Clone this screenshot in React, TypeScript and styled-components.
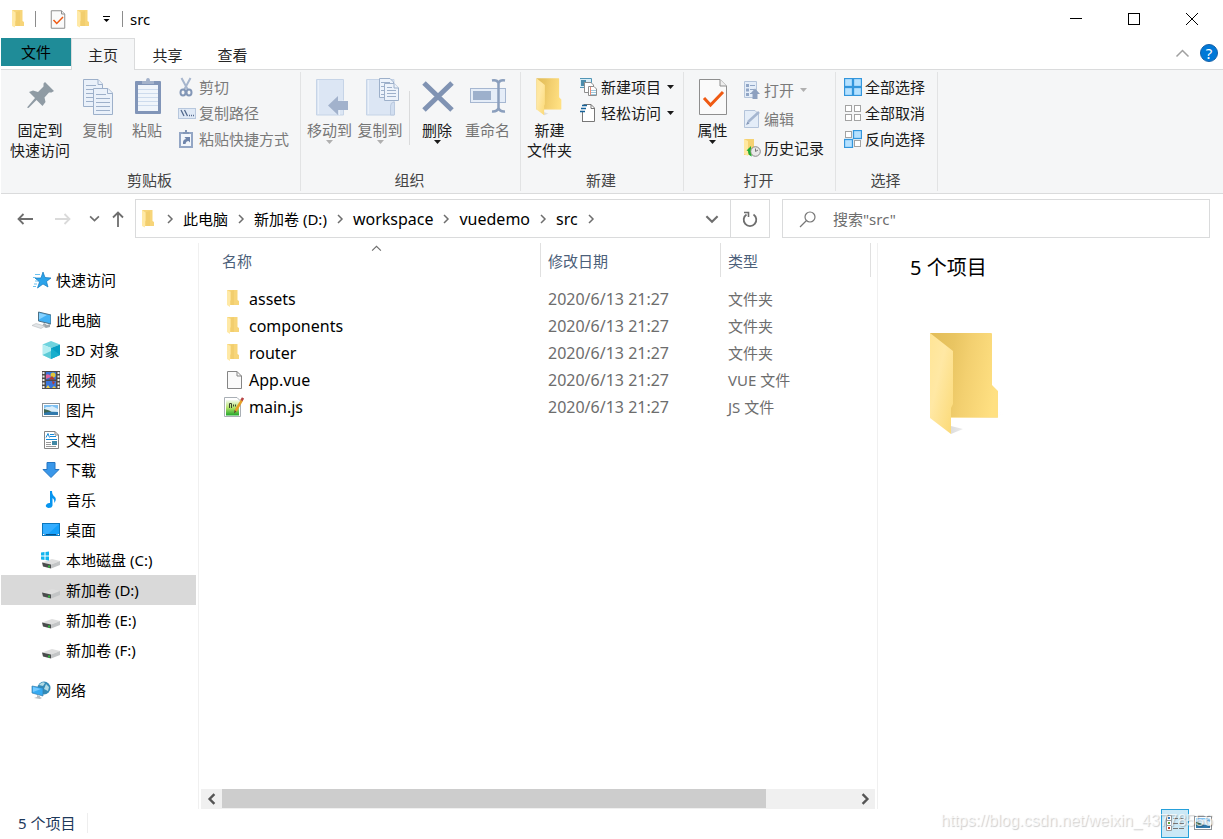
import React from "react";
import styled, { createGlobalStyle } from "styled-components";

const line = "#dadbdc";
const blueStroke = "#9db0ca";

const GlobalStyle = createGlobalStyle`
  * { box-sizing: border-box; }
  body { margin: 0; background: #fff; }
  body, button, input, table {
    font-family: "Noto Sans", "Noto Sans CJK SC", sans-serif;
    font-size: 15px;
    line-height: 20px;
    color: #000;
  }
  button { padding: 0; border: 0; background: none; }
  svg { display: block; flex: none; }
`;

const Window = styled.div`
  position: relative;
  display: flex;
  flex-direction: column;
  min-height: 100vh;
  padding-left: 1px;
`;

/* Title bar */
const TitleBar = styled.header`
  display: flex;
  align-items: center;
  height: 38px;
  padding: 0 2px 0 10px;
`;
const QuickButton = styled.button<{ $w: number }>`
  display: flex;
  align-items: center;
  justify-content: center;
  width: ${(p) => p.$w}px;
  height: 24px;
`;
const TitleRule = styled.span<{ $left: number; $right: number }>`
  width: 1px;
  height: 16px;
  margin: 0 ${(p) => p.$right}px 0 ${(p) => p.$left}px;
  background: #8c8c8c;
`;
const Title = styled.h1`
  flex: 1;
  margin: 0;
  font-size: 15px;
  font-weight: 400;
`;
const WindowButton = styled.button`
  display: flex;
  align-items: center;
  justify-content: center;
  width: 58px;
  height: 38px;
`;

/* Tabs */
const TabRow = styled.nav`
  display: flex;
  height: 32px;
  box-shadow: inset 0 -1px ${line};
`;
const FileTab = styled.button`
  width: 70px;
  height: 28px;
  background: #1f8c98;
`;
const Tab = styled.button<{ $active?: boolean }>`
  width: ${(p) => (p.$active ? 64 : 65)}px;
  height: 32px;
  color: #262626;
  border: 1px solid ${(p) => (p.$active ? line : "transparent")};
  border-bottom: 0;
  background: ${(p) => (p.$active ? "#f5f6f7" : "transparent")};
`;
const TabTools = styled.div`
  display: flex;
  align-items: center;
  gap: 11px;
  margin-left: auto;
  padding: 0 5px 2px 0;
`;
const HelpButton = styled.button`
  width: 18px;
  height: 18px;
  border: 1px solid #1560a8;
  border-radius: 50%;
  background: #0078d7;
  color: #fff;
  line-height: 16px;
`;

/* Ribbon */
const Ribbon = styled.section`
  display: flex;
  height: 124px;
  padding: 2px 0;
  background: #f5f6f7;
  border-bottom: 1px solid ${line};
`;
const Group = styled.div<{ $w: number }>`
  display: flex;
  flex-direction: column;
  flex: none;
  width: ${(p) => p.$w}px;
  border-right: 1px solid #e2e3e4;
`;
const GroupBody = styled.div<{ $left?: number }>`
  display: flex;
  flex: 1;
  padding-left: ${(p) => p.$left ?? 5}px;
`;
const GroupLabel = styled.div`
  height: 21px;
  padding-right: 2px;
  text-align: center;
  color: #444;
`;
const BigButton = styled.button<{ $w: number; $dim?: boolean }>`
  display: flex;
  flex-direction: column;
  align-items: center;
  width: ${(p) => p.$w}px;
  height: 90px;
  padding-top: 6px;
  white-space: nowrap;
  color: ${(p) => (p.$dim ? "#757575" : "#1a1a1a")};
  svg + span { margin-top: 4px; }
`;
const GroupRule = styled.span`
  width: 1px;
  height: 54px;
  margin: 19px 2px 0 4px;
  background: ${line};
`;
const SmallList = styled.div<{ $row?: number; $left?: number; $top?: number }>`
  display: flex;
  flex-direction: column;
  padding: ${(p) => p.$top ?? 2}px 0 0 ${(p) => p.$left ?? 5}px;
  button { height: ${(p) => p.$row ?? 26}px; }
`;
const SmallButton = styled.button<{ $dim?: boolean }>`
  display: flex;
  align-items: center;
  gap: 3px;
  white-space: nowrap;
  color: ${(p) => (p.$dim ? "#7a7a7a" : "#1a1a1a")};
  span { margin-right: 3px; }
`;

/* Address row */
const AddressRow = styled.div`
  display: flex;
  align-items: center;
  height: 49px;
  padding: 0 13px 0 9px;
`;
const NavButton = styled.button<{ $w: number }>`
  display: flex;
  align-items: center;
  justify-content: center;
  width: ${(p) => p.$w}px;
  height: 30px;
`;
const AddressBox = styled.div`
  display: flex;
  align-items: center;
  flex: 3 1 635px;
  height: 39px;
  margin: 0 12px 0 1px;
  padding-left: 5px;
  border: 1px solid ${line};
`;
const Crumbs = styled.nav`
  display: flex;
  align-items: center;
  flex: 1;
  padding-left: 10px;
  gap: 8px;
  white-space: nowrap;
`;
const Crumb = styled.a<{ $size: number }>`
  font-size: ${(p) => p.$size}px;
  color: #000;
  text-decoration: none;
`;
const RefreshButton = styled.button`
  display: flex;
  align-items: center;
  justify-content: center;
  width: 39px;
  height: 37px;
  border-left: 1px solid ${line};
`;
const SearchBox = styled.label`
  display: flex;
  align-items: center;
  gap: 16px;
  flex: 2 1 428px;
  height: 39px;
  padding: 0 16px;
  border: 1px solid ${line};
`;
const SearchInput = styled.input`
  flex: 1;
  min-width: 0;
  padding: 0;
  border: 0;
  outline: 0;
  background: none;
  &::placeholder { color: #6d6d6d; opacity: 1; }
`;

/* Main area */
const Main = styled.main`
  display: flex;
  flex: 1;
`;
const Sidebar = styled.nav`
  display: flex;
  flex-direction: column;
  gap: 10px;
  width: 198px;
  padding: 22px 2px 0 0;
  border-right: 1px solid #f0f0f0;
`;
const TreeItem = styled.a<{ $nested?: boolean; $active?: boolean }>`
  display: flex;
  align-items: center;
  gap: 5px;
  height: 30px;
  padding-left: ${(p) => (p.$nested ? 40 : 30)}px;
  color: #000;
  text-decoration: none;
  white-space: nowrap;
  background: ${(p) => (p.$active ? "#d9d9d9" : "transparent")};
`;
const FilePane = styled.section`
  display: flex;
  flex-direction: column;
  width: 679px;
  padding: 0 2px;
  border-right: 1px solid #f0f0f0;
`;
const FileTable = styled.table`
  width: 670px;
  table-layout: fixed;
  border-collapse: separate;
  border-spacing: 0;
  th, td { padding: 0; text-align: left; font-weight: 400; }
`;
const HeadCell = styled.th<{ $w: number; $left: number }>`
  width: ${(p) => p.$w}px;
  height: 42px;
  vertical-align: top;
  color: #4c607a;
  div {
    position: relative;
    height: 34px;
    padding: 8px 0 0 ${(p) => p.$left}px;
    border-right: 1px solid #e0e0e0;
  }
`;
const SortMark = styled.span`
  position: absolute;
  top: 0;
  left: 50%;
`;
const NameCell = styled.td`
  height: 27px;
  font-size: 16px;
  div {
    display: flex;
    align-items: center;
    gap: 5px;
    padding-left: 23px;
  }
`;
const DataCell = styled.td<{ $size: number }>`
  font-size: ${(p) => p.$size}px;
  color: #6d6d6d;
  div { padding-left: 7px; }
`;
const ScrollBar = styled.div`
  display: flex;
  height: 20px;
  margin-top: auto;
  background: #f0f0f0;
`;
const ScrollButton = styled.button`
  display: flex;
  align-items: center;
  justify-content: center;
  width: 21px;
`;
const ScrollTrack = styled.div`
  flex: 1;
  height: 19px;
`;
const ScrollThumb = styled.div`
  width: 86%;
  height: 100%;
  background: #cdcdcd;
`;
const Preview = styled.aside`
  flex: 1;
  padding: 11px 0 0 32px;
`;
const PreviewTitle = styled.h2`
  margin: 0 0 50px;
  font-size: 20px;
  line-height: 28px;
  font-weight: 400;
`;
const Indent = styled.div`
  padding-left: 19px;
`;

/* Status bar */
const StatusBar = styled.footer`
  display: flex;
  align-items: center;
  height: 30px;
  padding: 0 11px 2px 17px;
  color: #1e395b;
`;
const StatusText = styled.span`
  padding-right: 12px;
  border-right: 1px solid #eee;
`;
const ViewButtons = styled.div`
  display: flex;
  align-items: center;
  gap: 5px;
  margin-left: auto;
`;
const ViewButton = styled.button<{ $active?: boolean }>`
  display: flex;
  align-items: center;
  justify-content: center;
  width: ${(p) => (p.$active ? 28 : 18)}px;
  height: 29px;
  border: ${(p) => (p.$active ? "1px solid #26a0da" : "0")};
  background: ${(p) => (p.$active ? "#cbe8f6" : "none")};
`;
const Watermark = styled.div`
  position: absolute;
  right: 10px;
  bottom: 8px;
  font-family: "Liberation Sans", sans-serif;
  font-size: 16px;
  color: rgba(255, 255, 255, 0.7);
  text-shadow: 1px 1px 1px rgba(0, 0, 0, 0.2);
  pointer-events: none;
`;

/* Icons */
const Folder = ({ w = 14, h = 18 }: { w?: number; h?: number }) => (
  <svg width={w} height={h} viewBox="0 0 14 18">
    <path d="M1 0H11.5V11L13 12V16H1Z" fill="#f7d579" />
    <path d="M5 2L9 1V16H5Z" fill="#efca68" opacity=".6" />
    <path d="M1 0L4.5 2.5V10.5L4 11.5V17.5L1 16Z" fill="#ffe9a6" />
  </svg>
);

const LargeFolder = ({ w = 76, h = 104 }: { w?: number; h?: number }) => (
  <svg width={w} height={h} viewBox="0 0 76 104">
    <defs>
      <linearGradient id="folderBack" x1="0" y1=".3" x2="1" y2=".5">
        <stop offset="0" stopColor="#e3be5a" />
        <stop offset=".3" stopColor="#e9c562" />
        <stop offset=".55" stopColor="#f3d070" />
        <stop offset="1" stopColor="#ffe082" />
      </linearGradient>
      <linearGradient id="folderFlap" x1="0" y1="0" x2="1" y2="1">
        <stop offset="0" stopColor="#ffe596" />
        <stop offset=".4" stopColor="#ffe8a4" />
        <stop offset="1" stopColor="#fbd975" />
      </linearGradient>
      <linearGradient id="folderShade">
        <stop offset="0" stopColor="#bbb" />
        <stop offset="1" stopColor="#fff" stopOpacity="0" />
      </linearGradient>
    </defs>
    <path d="M22 102L34 97L22 94ZM66 86L77 82L68 79Z" fill="url(#folderShade)" opacity=".5" />
    <path d="M1 1H62Q63 1 63 2V53L69 59V85Q69 86 68 86H1Z" fill="url(#folderBack)" />
    <path d="M22 85.500H68" stroke="#fbe3a0" />
    <path d="M1 1L24 19V72L22 76V102L1 86Z" fill="url(#folderFlap)" />
  </svg>
);

const CheckPage = ({ w, h }: { w: number; h: number }) => (
  <svg width={w} height={h} viewBox="0 0 30 38">
    <path d="M1.500 1.500H22L28.500 8V36.500H1.500Z" fill="#fafafa" stroke="#8e8e8e" strokeWidth={w < 20 ? 2 : 1} />
    <path d="M22 1.500V8H28.500" fill="#eee" stroke="#8e8e8e" strokeWidth={w < 20 ? 2 : 1} />
    <path d="M6 20L12.500 27L25 14" fill="none" stroke="#ef5a13" strokeWidth="3" />
  </svg>
);

const Caret = ({ color = "#1a1a1a" }: { color?: string }) => (
  <svg width="7" height="4" viewBox="0 0 7 4">
    <path d="M0 0H7L3.500 4Z" fill={color} />
  </svg>
);

const Chevron = ({
  dir = "right",
  size = 10,
  color = "#6e6e6e",
  weight = 1.5,
}: {
  dir?: "right" | "left" | "down" | "up";
  size?: number;
  color?: string;
  weight?: number;
}) => {
  const path = { right: "M3 1L7 5L3 9", left: "M7 1L3 5L7 9", down: "M1 3L5 7L9 3", up: "M1 7L5 3L9 7" }[dir];
  return (
    <svg width={size} height={size} viewBox="0 0 10 10">
      <path d={path} fill="none" stroke={color} strokeWidth={weight} />
    </svg>
  );
};

const PinIcon = () => (
  <svg width="38" height="38" viewBox="0 1 38 38">
    <path d="M24 5L33 14L30.500 15.500H28L23.500 20.500L24.500 25L21.500 29L15.500 23L7.500 31L6 30.500L14 21L8 15L12 13.500L17 15L22.500 9.500V6.500Z" fill="#8f9ba4" />
  </svg>
);

const CopyIcon = () => (
  <svg width="38" height="38" viewBox="0 0 38 38">
    <g stroke={blueStroke} fill="#eaf1fa">
      <path d="M4.500 1.500H19L23.500 6V28.500H4.500Z" />
      <path d="M19 1.500V6.500H23.500M7 7.500H17M7 11.500H20M7 15.500H20M7 19.500H20M7 23.500H20" />
      <path d="M14.500 10.500H29L33.500 15V36.500H14.500Z" />
      <path d="M28.500 10.500V15.500H33.500M17 16.500H27M17 20.500H31M17 24.500H31M17 28.500H31M17 32.500H31" />
    </g>
  </svg>
);

const PasteIcon = () => (
  <svg width="38" height="38" viewBox="-1 1 38 38">
    <rect x="6" y="4" width="26" height="33" rx="1" fill="#8195b8" />
    <path d="M9 8H29V34H9Z" fill="#f0f5fb" />
    <path d="M9 12.500H29M9 16.500H29M9 20.500H29M9 24.500H29M9 28.500H29" stroke="#cddbed" />
    <path d="M13 7V4H17Q17 1 19 1T21 4H25V7Z" fill="#a3b2cb" />
  </svg>
);

const ScissorsIcon = () => (
  <svg width="18" height="20" viewBox="1 0 18 20">
    <g fill="none" stroke="#8397b7" strokeWidth="1.500">
      <path d="M4.500 1L11 13M13.500 1L7 13" stroke="#a7b6cd" strokeWidth="2" />
      <ellipse cx="6" cy="15.500" rx="2.500" ry="3" strokeWidth="2" />
      <ellipse cx="12" cy="15.500" rx="2.500" ry="3" strokeWidth="2" />
    </g>
  </svg>
);

const PathIcon = () => (
  <svg width="18" height="18" viewBox="0 0 18 18">
    <rect x=".5" y="4.500" width="17" height="10" fill="#dfe9f6" stroke="#b7c7dd" />
    <path d="M3 6L6 12M6.500 6L9.500 12M11 11.500H12M13 11.500H14M15 11.500H16" stroke="#53698d" strokeWidth="1.300" />
  </svg>
);

const ShortcutIcon = () => (
  <svg width="18" height="20" viewBox="1 0 18 20">
    <rect x="3" y="4" width="12" height="14" fill="#f2f6fb" stroke="#93a6c5" strokeWidth="2" />
    <path d="M6 5V3H8V1H10V3H12V5Z" fill="#8397b7" />
    <path d="M6 15Q5.500 10.500 9 10L7.500 8H13V13.500L11.500 12Q9 12 8.500 15Z" fill="#6f85ab" />
  </svg>
);

const MoveIcon = () => (
  <svg width="38" height="38" viewBox="-2 0 38 38">
    <path d="M3.500 1.500H30.500V37H3.500Z" fill="#dce6f4" stroke="#c6d4e7" />
    <path d="M5.500 2V36M26.500 37V26L30.500 22" fill="none" stroke="#eaf1fa" />
    <path d="M15 27.500L25 18V23H35V32H25V37Z" fill="#a2b2cc" />
  </svg>
);

const CopyToIcon = () => (
  <svg width="38" height="38" viewBox="-2 0 38 38">
    <path d="M3.500 1.500H31V37H3.500Z" fill="#dce6f4" stroke="#c6d4e7" />
    <path d="M5.500 2V36" stroke="#eaf1fa" />
    <path d="M27.500 37V28Q27.500 24 31.500 24V37Z" fill="#d1def0" stroke="#bccbe0" />
    <g fill="#edf3fb" stroke={blueStroke}>
      <path d="M16.500 .5H27L30.500 4V19.500H16.500Z" />
      <path d="M18 4.500H27M18 8.500H27M18 12.500H27M18 16.500H27" />
      <path d="M21.500 5.500H31L35.500 10V22.500H21.500Z" />
      <path d="M31 5.500V10H35.500M24 9.500H29M24 12.500H33M24 15.500H33M24 18.500H33" />
    </g>
  </svg>
);

const DeleteIcon = () => (
  <svg width="38" height="38" viewBox="-1 1 38 38">
    <path d="M5 6L33 33M33 6L5 33" stroke="#8093b3" strokeWidth="5" />
  </svg>
);

const RenameIcon = () => (
  <svg width="38" height="38" viewBox="0 1 38 38">
    <rect x="1.500" y="11.500" width="35" height="14" fill="#e5edf8" stroke="#a6b7d1" />
    <rect x="4" y="14" width="18" height="9" fill="#9db0cc" />
    <path d="M23 3.500Q28 2.500 29.500 6Q31 2.500 36 3.500M29.500 5V32M23 34.500Q28 35 29.500 31Q31 35 36 34.500" fill="none" stroke="#8b9fbd" strokeWidth="2.500" />
  </svg>
);

const NewItemIcon = () => (
  <svg width="18" height="20" viewBox="1 0 18 20">
    <path d="M.5 1.500H12.500V10.500H.5Z" fill="#d8edf7" stroke="#5195b5" />
    <path d="M2 3H7V9H2Z" fill="#4b8dac" />
    <path d="M5.500 5.500H12L14.500 8V15.500H5.500Z" fill="#fff" stroke="#8e8e8e" />
    <path d="M9.500 9.500H15L17.500 12V18.500H9.500Z" fill="#fff" stroke="#8e8e8e" />
    <path d="M11.500 10V18" stroke="#e78c79" />
    <path d="M12 13.500H17M12 15.500H17M12 17.500H17" stroke="#9cc8de" />
  </svg>
);

const EasyAccessIcon = () => (
  <svg width="18" height="20" viewBox="1 0 18 20">
    <path d="M4.500 1.500H12L15.500 5V18.500H3" fill="#fff" stroke="#777" />
    <path d="M3.500 9V18M12 1.500V5.500H15.500" fill="none" stroke="#777" />
    <path d="M3 2.500H8M2 5.500H7M1 8.500H6" stroke="#17639a" strokeWidth="1.500" />
  </svg>
);

const OpenIcon = () => (
  <svg width="18" height="20" viewBox="0 0 18 20">
    <path d="M1.500 1.500H13.500V17.500H1.500Z" fill="#e4edf8" stroke="#b4c4da" />
    <path d="M3 4H6V7H3ZM3 8.500H6V11.500H3ZM3 13H6V16H3Z" fill="#91a6c6" />
    <path d="M7 5.500H12M7 9.500H11M7 13.500H10" stroke="#91a6c6" />
    <path d="M9.500 19V14H7L12 8.500L17 14H14.500V19Z" fill="#8da0bf" />
  </svg>
);

const EditIcon = () => (
  <svg width="18" height="20" viewBox="0 0 18 20">
    <path d="M1.500 1.500H12L15.500 5V18.500H1.500Z" fill="#e4edf8" stroke="#b4c4da" />
    <path d="M5 13L16 3" stroke="#a5b6d0" strokeWidth="2.500" />
    <path d="M3 16L4.500 12.500L6.500 14.500Z" fill="#8397b7" />
  </svg>
);

const HistoryIcon = () => (
  <svg width="18" height="20" viewBox="0 0 18 20">
    <path d="M1 1H11V17H1Z" fill="#f5d272" />
    <path d="M1 1L5 3V18L1 16Z" fill="#ffe8a2" />
    <circle cx="12.500" cy="13.500" r="4.800" fill="#e9e9e9" stroke="#888" />
    <path d="M12.500 10.500V13.500L15 12" fill="none" stroke="#777" />
    <path d="M3.500 12.500L8 8V10.500Q6.500 13.500 9 18.500Q5 17.500 5 13Z" fill="#20ad35" />
  </svg>
);

const SelectIcon = ({ on }: { on: boolean[] }) => (
  <svg width="18" height="18" viewBox="0 0 18 18">
    {[[0, 0], [9, 0], [0, 9], [9, 9]].map(([x, y], i) =>
      on[i] ? (
        <rect key={i} x={x + 0.5} y={y + 0.5} width="8" height="8" fill="#b5e1ff" stroke="#3396dc" strokeWidth="1.300" />
      ) : (
        <rect key={i} x={x + 1.5} y={y + 1.5} width="6" height="6" fill="#fff" stroke="#a3a3a3" />
      ),
    )}
  </svg>
);

const Arrow = ({ color = "#6e6e6e", turn = 0 }: { color?: string; turn?: number }) => (
  <svg width="18" height="18" viewBox="0 0 18 18">
    <path d="M2 9H17M7.500 4L2.500 9L7.500 14" transform={`rotate(${turn} 9 9)`} fill="none" stroke={color} strokeWidth="1.800" />
  </svg>
);

const RefreshIcon = () => (
  <svg width="18" height="18" viewBox="0 0 18 18">
    <path d="M5.500 4.500A6.300 6.300 0 1 0 12.500 4.500" fill="none" stroke="#6e6e6e" strokeWidth="1.800" />
    <path d="M3 2.500H7.500V7" fill="none" stroke="#6e6e6e" strokeWidth="1.600" />
  </svg>
);

const SearchIcon = () => (
  <svg width="18" height="18" viewBox="0 0 18 18">
    <circle cx="11" cy="7" r="5" fill="none" stroke="#777" strokeWidth="1.200" />
    <path d="M7.500 10.500L1 17" stroke="#777" strokeWidth="1.200" />
  </svg>
);

const StarIcon = () => (
  <svg width="20" height="18" viewBox="0 0 20 18">
    <path d="M12 1L14 6.500L20 7L15.500 10.500L17 16L12 13L6.500 17L8.500 11L4 7H10Z" fill="#2ba3ea" stroke="#1179bd" strokeWidth=".7" />
    <path d="M4 3.500H9M2 6.500H5M4 10H7M3 13H6M2 15.500H5" stroke="#6cc1ef" />
  </svg>
);

const PcIcon = () => (
  <svg width="20" height="18" viewBox="0 0 20 18">
    <path d="M7.500 1L20 4V13L7.500 10Z" fill="#42b1f5" stroke="#4c7086" />
    <path d="M8 2L16 4L8 8.500Z" fill="#86d2ff" />
    <path d="M13 12L16 14L19 13V16L15 17L11 15Z" fill="#a1a8ad" />
    <path d="M1 14.500L5 12.500L14 15L10 17.500Z" fill="#e2e5e7" stroke="#b7bcc0" strokeWidth=".6" />
  </svg>
);

const CubeIcon = () => (
  <svg width="20" height="20" viewBox="0 0 20 20">
    <path d="M1.500 4.500L10 1L19 4.500L10 8Z" fill="#6fd3de" />
    <path d="M1.500 4.500L10 8V19L1.500 15Z" fill="#b4eef2" />
    <path d="M1.500 15L10 11V19Z" fill="#5ccbd6" />
    <path d="M19 4.500L10 8V19L19 15Z" fill="#089fc4" />
    <path d="M10 8L19 15L10 19Z" fill="#18afcd" />
  </svg>
);

const VideoIcon = () => (
  <svg width="20" height="20" viewBox="0 0 20 20">
    <path d="M1 1H19V19H1Z" fill="#4e4a49" />
    <path d="M2.500 2V18M17.500 2V18" stroke="#eee" strokeWidth="2" strokeDasharray="2 1.500" />
    <path d="M5 2H15V9.500H5ZM5 11H15V18H5Z" fill="#3975db" />
    <path d="M5 5Q8 3 10 7Q7 8 5 9Z" fill="#e1629e" />
    <circle cx="12" cy="5" r="2.500" fill="#dfc53a" />
    <path d="M9 8L11 6L14 9.500H8ZM11 11L14 12L12 15Z" fill="#b83829" />
    <path d="M5 18L7 15L9 18ZM11 18L13 16L15 18Z" fill="#f0cf41" />
  </svg>
);

const PictureIcon = () => (
  <svg width="20" height="16" viewBox="0 0 20 16">
    <rect x="1.500" y="1.500" width="17" height="13" fill="#fff" stroke="#8e9499" />
    <path d="M3 3H17V13H3Z" fill="#7fc1f2" />
    <path d="M5 5H9L11 4L17 7V10H3V7Z" fill="#d9eefb" />
    <path d="M3 7Q9 8 12 11L3 12Z" fill="#3d6654" />
    <path d="M3 11Q9 9 17 10V13H3Z" fill="#317aad" />
  </svg>
);

const DocIcon = () => (
  <svg width="20" height="20" viewBox="0 0 20 20">
    <path d="M3.500 1.500H14L17.500 5V18.500H3.500Z" fill="#fff" stroke="#858585" />
    <path d="M14 1.500V5H17.500" fill="none" stroke="#858585" />
    <path d="M5 7.500L7 3.500L8.500 7.500M9 4.500H13M9 6.500H15M5 9.500H16" fill="none" stroke="#1689d8" />
    <path d="M5 12.500H10M5 14.500H10M5 16.500H15" stroke="#999" />
    <path d="M11 11H16V15H11Z" fill="#4289a5" />
  </svg>
);

const DownloadIcon = () => (
  <svg width="20" height="20" viewBox="0 0 20 20">
    <path d="M6 2.500H14V9.500H18L10 17.500L2 9.500H6Z" fill="#3997e9" stroke="#2475c2" />
  </svg>
);

const MusicIcon = () => (
  <svg width="20" height="20" viewBox="0 0 20 20">
    <path d="M9 1H11Q11 5 14 7Q16 10 13 13Q14 10 11.500 8V15.500Q11 18 7.500 18Q4 17 5 15Q6.500 12.500 9 13Z" fill="#0795ef" />
  </svg>
);

const DesktopIcon = () => (
  <svg width="20" height="16" viewBox="0 0 20 16">
    <rect x="1.500" y="1.500" width="17" height="12" fill="#14a0fb" stroke="#0b77bd" />
    <path d="M2 2H18L7 12H2Z" fill="#34adff" />
    <path d="M2 12.500H4M5 12.500H15M16 12.500H18" stroke="#084f87" />
    <path d="M2 12.500H3.500M16.500 12.500H18" stroke="#fff" />
  </svg>
);

const DriveIcon = ({ system }: { system?: boolean }) => (
  <svg width="20" height="18" viewBox="0 0 20 18">
    <path d="M1 11.500L11 8L19 10L10 13.500Z" fill="#dedede" />
    <path d="M1 11.500L10 13.500V17.500L2 15.500Z" fill="#4a4c4d" />
    <path d="M10 13.500L19 10V14L10 17.500Z" fill="#c3c5c6" />
    <path d="M8 14.500V16.500" stroke="#2bd83a" strokeWidth="1.500" />
    {system && (
      <path d="M0 1.500L3.500 1V4.500H0ZM4.500 1L8 .5V4.500H4.500ZM0 5.500H3.500V9L0 8.500ZM4.500 5.500H8V9.500L4.500 9Z" fill="#12b4ee" />
    )}
  </svg>
);

const NetworkIcon = () => (
  <svg width="20" height="20" viewBox="0 0 20 20">
    <circle cx="13" cy="8" r="6.500" fill="#348bb7" />
    <path d="M8 5Q11 1 14 3L12 6ZM15 4L18 7L17 11L13 9Z" fill="#b2dbe5" />
    <path d="M1 6L12 8V16L1 13Z" fill="#35aaf2" stroke="#367eac" strokeWidth=".7" />
    <path d="M2 7L10 9L2 12Z" fill="#75caff" />
    <path d="M6 15V17L3 18L9 19L11 18L9 17V16Z" fill="#b7bec2" />
  </svg>
);

const BlankFileIcon = () => (
  <svg width="20" height="20" viewBox="0 0 20 20">
    <path d="M3.500 1.500H13L17.500 6V18.500H3.500Z" fill="#fafafa" stroke="#858585" />
    <path d="M13 1.500V6H17.500" fill="none" stroke="#858585" />
  </svg>
);

const JsFileIcon = () => (
  <svg width="20" height="20" viewBox="0 0 20 20">
    <defs>
      <linearGradient id="jsGreen" x1="0" y1="0" x2="0" y2="1">
        <stop offset="0" stopColor="#f4faf0" />
        <stop offset=".5" stopColor="#b2e267" />
        <stop offset="1" stopColor="#20a62b" />
      </linearGradient>
    </defs>
    <path d="M.5 .5H13L16.500 4V19.500H.5Z" fill="#fff" stroke="#a9afb5" />
    <path d="M2 3H15V18.500H2Z" fill="url(#jsGreen)" />
    <path d="M5.500 11V6.500H7.500V11M9.500 7.500V9.500M11.500 7.500V9.500" fill="none" stroke="#3b442f" />
    <path d="M11.500 14L18 3" stroke="#e6a027" strokeWidth="2.500" />
    <path d="M17.500 3.500L19 1" stroke="#b74545" strokeWidth="2.500" />
    <path d="M10 16.500L10.500 13L12.500 14.500Z" fill="#614c31" />
  </svg>
);

const DetailsIcon = () => (
  <svg width="18" height="17" viewBox="0 0 18 17">
    <path d="M.5 .5H5.500V5.500H.5ZM.5 5.500H5.500V10.500H.5ZM.5 10.500H5.500V15.500H.5Z" fill="#fff" stroke="#999" />
    <path d="M2 2H4V4H2Z" fill="#397ec0" />
    <path d="M2 7H4V9H2Z" fill="#61a13a" />
    <path d="M2 12H4V14H2Z" fill="#c23b26" />
    <path d="M7 3.500H12M13 3.500H18M7 8.500H12M13 8.500H18M7 13.500H12M13 13.500H18" stroke="#777" />
  </svg>
);

const FolderRowIcon = () => (
  <svg width="20" height="20" viewBox="0 0 20 20">
    <path d="M3 1H13.500V11L15 12V16H3Z" fill="#f7d579" />
    <path d="M7 2L10 1V16H7Z" fill="#efca68" opacity=".6" />
    <path d="M3 1L6.500 3V11L6 12V18L3 16Z" fill="#ffe9a6" />
  </svg>
);

const places = [
  { name: "3D 对象", icon: <CubeIcon /> },
  { name: "视频", icon: <VideoIcon /> },
  { name: "图片", icon: <PictureIcon /> },
  { name: "文档", icon: <DocIcon /> },
  { name: "下载", icon: <DownloadIcon /> },
  { name: "音乐", icon: <MusicIcon /> },
  { name: "桌面", icon: <DesktopIcon /> },
  { name: "本地磁盘 (C:)", icon: <DriveIcon system /> },
  { name: "新加卷 (D:)", icon: <DriveIcon />, active: true },
  { name: "新加卷 (E:)", icon: <DriveIcon /> },
  { name: "新加卷 (F:)", icon: <DriveIcon /> },
];

const files = [
  { name: "assets", type: "文件夹", icon: <FolderRowIcon /> },
  { name: "components", type: "文件夹", icon: <FolderRowIcon /> },
  { name: "router", type: "文件夹", icon: <FolderRowIcon /> },
  { name: "App.vue", type: "VUE 文件", icon: <BlankFileIcon /> },
  { name: "main.js", type: "JS 文件", icon: <JsFileIcon /> },
];

const crumbs = [
  { name: "此电脑", size: 15 },
  { name: "新加卷 (D:)", size: 15 },
  { name: "workspace", size: 16 },
  { name: "vuedemo", size: 16 },
  { name: "src", size: 16 },
];

export default function App() {
  return (
    <Window>
      <GlobalStyle />
      <TitleBar>
        <QuickButton $w={14} aria-label="文件夹"><Folder /></QuickButton>
        <TitleRule $left={10} $right={12} />
        <QuickButton $w={20} aria-label="属性"><CheckPage w={16} h={19} /></QuickButton>
        <QuickButton $w={30} aria-label="新建文件夹"><Folder /></QuickButton>
        <QuickButton $w={16} aria-label="自定义快速访问工具栏">
          <svg width="8" height="8" viewBox="0 0 8 8"><path d="M1 1.500H8" stroke="#000" /><path d="M1.500 4H7.500L4.500 7Z" fill="#000" /></svg>
        </QuickButton>
        <TitleRule $left={8} $right={7} />
        <Title>src</Title>
        <WindowButton aria-label="最小化">
          <svg width="12" height="12" viewBox="0 0 12 12"><path d="M0 5.500H12" stroke="#000" /></svg>
        </WindowButton>
        <WindowButton aria-label="最大化">
          <svg width="12" height="12" viewBox="0 0 12 12"><rect x=".5" y=".5" width="11" height="11" fill="none" stroke="#000" /></svg>
        </WindowButton>
        <WindowButton aria-label="关闭">
          <svg width="12" height="12" viewBox="0 0 12 12"><path d="M0 0L12 12M12 0L0 12" stroke="#000" /></svg>
        </WindowButton>
      </TitleBar>

      <TabRow>
        <FileTab>文件</FileTab>
        <Tab $active>主页</Tab>
        <Tab>共享</Tab>
        <Tab>查看</Tab>
        <TabTools>
          <QuickButton $w={13} aria-label="折叠功能区"><Chevron dir="up" size={15} color="#a0a0a0" weight={1} /></QuickButton>
          <HelpButton>?</HelpButton>
        </TabTools>
      </TabRow>

      <Ribbon>
        <Group $w={300}>
          <GroupBody>
            <BigButton $w={68}><PinIcon /><span>固定到</span><span>快速访问</span></BigButton>
            <BigButton $w={47} $dim><CopyIcon /><span>复制</span></BigButton>
            <BigButton $w={52} $dim><PasteIcon /><span>粘贴</span></BigButton>
            <SmallList>
              <SmallButton $dim><ScissorsIcon /><span>剪切</span></SmallButton>
              <SmallButton $dim><PathIcon /><span>复制路径</span></SmallButton>
              <SmallButton $dim><ShortcutIcon /><span>粘贴快捷方式</span></SmallButton>
            </SmallList>
          </GroupBody>
          <GroupLabel>剪贴板</GroupLabel>
        </Group>
        <Group $w={220}>
          <GroupBody $left={3}>
            <BigButton $w={51} $dim><MoveIcon /><span>移动到</span><Caret color="#b0b0b0" /></BigButton>
            <BigButton $w={50} $dim><CopyToIcon /><span>复制到</span><Caret color="#b0b0b0" /></BigButton>
            <GroupRule />
            <BigButton $w={50}><DeleteIcon /><span>删除</span><Caret /></BigButton>
            <BigButton $w={51} $dim><RenameIcon /><span>重命名</span></BigButton>
          </GroupBody>
          <GroupLabel>组织</GroupLabel>
        </Group>
        <Group $w={163}>
          <GroupBody>
            <BigButton $w={47}><LargeFolder w={28} h={38} /><span>新建</span><span>文件夹</span></BigButton>
            <SmallList $left={7}>
              <SmallButton><NewItemIcon /><span>新建项目</span><Caret /></SmallButton>
              <SmallButton><EasyAccessIcon /><span>轻松访问</span><Caret /></SmallButton>
            </SmallList>
          </GroupBody>
          <GroupLabel>新建</GroupLabel>
        </Group>
        <Group $w={152}>
          <GroupBody>
            <BigButton $w={47}><CheckPage w={30} h={38} /><span>属性</span><Caret /></BigButton>
            <SmallList $row={29} $left={7} $top={3}>
              <SmallButton $dim><OpenIcon /><span>打开</span><Caret color="#b0b0b0" /></SmallButton>
              <SmallButton $dim><EditIcon /><span>编辑</span></SmallButton>
              <SmallButton><HistoryIcon /><span>历史记录</span></SmallButton>
            </SmallList>
          </GroupBody>
          <GroupLabel>打开</GroupLabel>
        </Group>
        <Group $w={102}>
          <GroupBody $left={3}>
            <SmallList>
              <SmallButton><SelectIcon on={[true, true, true, true]} /><span>全部选择</span></SmallButton>
              <SmallButton><SelectIcon on={[false, false, false, false]} /><span>全部取消</span></SmallButton>
              <SmallButton><SelectIcon on={[false, true, true, false]} /><span>反向选择</span></SmallButton>
            </SmallList>
          </GroupBody>
          <GroupLabel>选择</GroupLabel>
        </Group>
      </Ribbon>

      <AddressRow>
        <NavButton $w={30} aria-label="后退"><Arrow /></NavButton>
        <NavButton $w={46} aria-label="前进"><Arrow color="#dadada" turn={180} /></NavButton>
        <NavButton $w={16} aria-label="最近浏览的位置"><Chevron dir="down" size={11} /></NavButton>
        <NavButton $w={32} aria-label="上移"><Arrow turn={90} /></NavButton>
        <AddressBox>
          <Folder />
          <Crumbs>
            <Chevron />
            {crumbs.map((c) => (
              <React.Fragment key={c.name}>
                <Crumb href="#" $size={c.size}>{c.name}</Crumb>
                <Chevron />
              </React.Fragment>
            ))}
          </Crumbs>
          <NavButton $w={36} aria-label="展开地址"><Chevron dir="down" size={14} /></NavButton>
          <RefreshButton aria-label="刷新"><RefreshIcon /></RefreshButton>
        </AddressBox>
        <SearchBox>
          <SearchIcon />
          <SearchInput type="text" aria-label="搜索" placeholder={'搜索"src"'} />
        </SearchBox>
      </AddressRow>

      <Main>
        <Sidebar>
          <TreeItem href="#"><StarIcon />快速访问</TreeItem>
          <div>
            <TreeItem href="#"><PcIcon />此电脑</TreeItem>
            {places.map((p) => (
              <TreeItem key={p.name} href="#" $nested $active={p.active}>{p.icon}{p.name}</TreeItem>
            ))}
          </div>
          <TreeItem href="#"><NetworkIcon />网络</TreeItem>
        </Sidebar>
        <FilePane>
          <FileTable>
            <thead>
              <tr>
                <HeadCell $w={340} $left={21}>
                  <div>名称<SortMark><Chevron dir="up" size={11} weight={1} /></SortMark></div>
                </HeadCell>
                <HeadCell $w={180} $left={7}><div>修改日期</div></HeadCell>
                <HeadCell $w={150} $left={7}><div>类型</div></HeadCell>
              </tr>
            </thead>
            <tbody>
              {files.map((f) => (
                <tr key={f.name}>
                  <NameCell><div>{f.icon}{f.name}</div></NameCell>
                  <DataCell $size={16}><div>2020/6/13 21:27</div></DataCell>
                  <DataCell $size={15}><div>{f.type}</div></DataCell>
                </tr>
              ))}
            </tbody>
          </FileTable>
          <ScrollBar>
            <ScrollButton aria-label="向左滚动"><Chevron dir="left" size={12} color="#555" weight={2} /></ScrollButton>
            <ScrollTrack><ScrollThumb /></ScrollTrack>
            <ScrollButton aria-label="向右滚动"><Chevron size={12} color="#555" weight={2} /></ScrollButton>
          </ScrollBar>
        </FilePane>
        <Preview>
          <PreviewTitle>5 个项目</PreviewTitle>
          <Indent><LargeFolder /></Indent>
        </Preview>
      </Main>

      <StatusBar>
        <StatusText>5 个项目</StatusText>
        <ViewButtons>
          <ViewButton $active aria-label="详细信息"><DetailsIcon /></ViewButton>
          <ViewButton aria-label="大图标"><PictureIcon /></ViewButton>
        </ViewButtons>
      </StatusBar>
      <Watermark>https://blog.csdn.net/weixin_43778556</Watermark>
    </Window>
  );
}
